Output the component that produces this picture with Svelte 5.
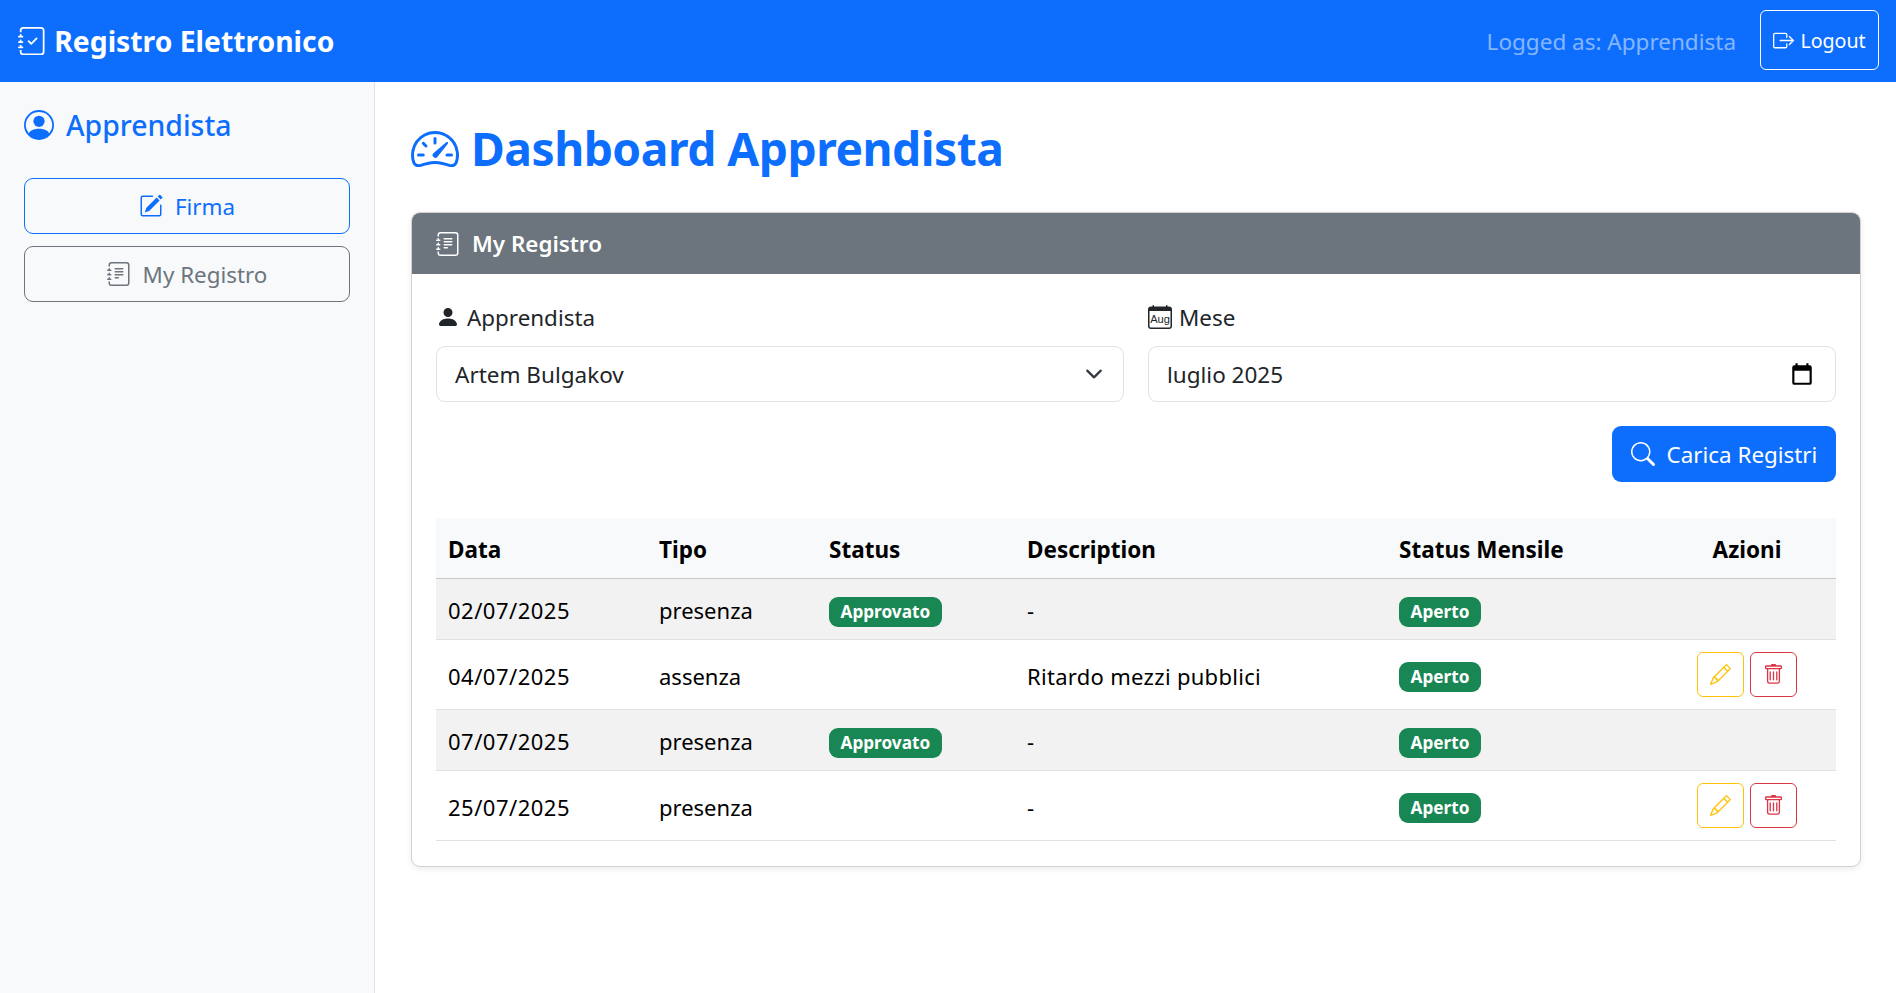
<script>
	const rows = [
		{ data: '02/07/2025', tipo: 'presenza', status: 'Approvato', desc: '-', actions: false },
		{ data: '04/07/2025', tipo: 'assenza', status: '', desc: 'Ritardo mezzi pubblici', actions: true },
		{ data: '07/07/2025', tipo: 'presenza', status: 'Approvato', desc: '-', actions: false },
		{ data: '25/07/2025', tipo: 'presenza', status: '', desc: '-', actions: true }
	];
</script>

{#snippet journalDots()}
	<path d="M3 0h10a2 2 0 0 1 2 2v12a2 2 0 0 1-2 2H3a2 2 0 0 1-2-2v-1h1v1a1 1 0 0 0 1 1h10a1 1 0 0 0 1-1V2a1 1 0 0 0-1-1H3a1 1 0 0 0-1 1v1H1V2a2 2 0 0 1 2-2z" />
	<path d="M1 5v-.5a.5.5 0 0 1 1 0V5h.5a.5.5 0 0 1 0 1h-2a.5.5 0 0 1 0-1H1zm0 3v-.5a.5.5 0 0 1 1 0V8h.5a.5.5 0 0 1 0 1h-2a.5.5 0 0 1 0-1H1zm0 3v-.5a.5.5 0 0 1 1 0v.5h.5a.5.5 0 0 1 0 1h-2a.5.5 0 0 1 0-1H1z" />
{/snippet}

{#snippet journalText()}
	<svg class="bi" viewBox="0 0 16 16" fill="currentColor">
		<path d="M5 10.5a.5.5 0 0 1 .5-.5h2a.5.5 0 0 1 0 1h-2a.5.5 0 0 1-.5-.5zm0-2a.5.5 0 0 1 .5-.5h5a.5.5 0 0 1 0 1h-5a.5.5 0 0 1-.5-.5zm0-2a.5.5 0 0 1 .5-.5h5a.5.5 0 0 1 0 1h-5a.5.5 0 0 1-.5-.5zm0-2a.5.5 0 0 1 .5-.5h5a.5.5 0 0 1 0 1h-5a.5.5 0 0 1-.5-.5z" />
		{@render journalDots()}
	</svg>
{/snippet}

<nav class="navbar">
	<div class="brand">
		<svg class="bi" viewBox="0 0 16 16" fill="currentColor">
			<path fill-rule="evenodd" d="M10.854 6.146a.5.5 0 0 1 0 .708l-3 3a.5.5 0 0 1-.708 0l-1.5-1.5a.5.5 0 1 1 .708-.708L7.5 8.793l2.646-2.647a.5.5 0 0 1 .708 0z" />
			{@render journalDots()}
		</svg>
		Registro Elettronico
	</div>
	<div class="nav-right">
		<span class="logged">Logged as: Apprendista</span>
		<button class="btn-logout">
			<svg class="bi" viewBox="0 0 16 16" fill="currentColor">
				<path fill-rule="evenodd" d="M10 12.5a.5.5 0 0 1-.5.5h-8a.5.5 0 0 1-.5-.5v-9a.5.5 0 0 1 .5-.5h8a.5.5 0 0 1 .5.5v2a.5.5 0 0 0 1 0v-2A1.5 1.5 0 0 0 9.5 2h-8A1.5 1.5 0 0 0 0 3.5v9A1.5 1.5 0 0 0 1.5 14h8a1.5 1.5 0 0 0 1.5-1.5v-2a.5.5 0 0 0-1 0v2z" />
				<path fill-rule="evenodd" d="M15.854 8.354a.5.5 0 0 0 0-.708l-3-3a.5.5 0 0 0-.708.708L14.293 7.5H5.5a.5.5 0 0 0 0 1h8.793l-2.147 2.146a.5.5 0 0 0 .708.708l3-3z" />
			</svg>
			Logout
		</button>
	</div>
</nav>

<div class="layout">
	<aside class="sidebar">
		<h5 class="side-title">
			<svg class="bi" viewBox="0 0 16 16" fill="currentColor">
				<path d="M11 6a3 3 0 1 1-6 0 3 3 0 0 1 6 0z" />
				<path fill-rule="evenodd" d="M0 8a8 8 0 1 1 16 0A8 8 0 0 1 0 8zm8-7a7 7 0 0 0-5.468 11.37C3.242 11.226 4.805 10 8 10s4.757 1.225 5.468 2.37A7 7 0 0 0 8 1z" />
			</svg>
			Apprendista
		</h5>
		<button class="side-btn primary">
			<svg class="bi" viewBox="0 0 16 16" fill="currentColor">
				<path d="M15.502 1.94a.5.5 0 0 1 0 .706L14.459 3.69l-2-2L13.502.646a.5.5 0 0 1 .707 0l1.293 1.293zm-1.75 2.456-2-2L4.939 9.21a.5.5 0 0 0-.121.196l-.805 2.414a.25.25 0 0 0 .316.316l2.414-.805a.5.5 0 0 0 .196-.12l6.813-6.814z" />
				<path fill-rule="evenodd" d="M1 13.5A1.5 1.5 0 0 0 2.5 15h11a1.5 1.5 0 0 0 1.5-1.5v-6a.5.5 0 0 0-1 0v6a.5.5 0 0 1-.5.5h-11a.5.5 0 0 1-.5-.5v-11a.5.5 0 0 1 .5-.5H9a.5.5 0 0 0 0-1H2.5A1.5 1.5 0 0 0 1 2.5v11z" />
			</svg>
			Firma
		</button>
		<button class="side-btn secondary">
			{@render journalText()}
			My Registro
		</button>
	</aside>

	<main class="content">
		<h1 class="title">
			<svg class="bi" viewBox="0 0 16 16" fill="currentColor">
				<path d="M8 4a.5.5 0 0 1 .5.5V6a.5.5 0 0 1-1 0V4.5A.5.5 0 0 1 8 4zM3.732 5.732a.5.5 0 0 1 .707 0l.915.914a.5.5 0 1 1-.708.708l-.914-.915a.5.5 0 0 1 0-.707zM2 10a.5.5 0 0 1 .5-.5h1.586a.5.5 0 0 1 0 1H2.5A.5.5 0 0 1 2 10zm9.5 0a.5.5 0 0 1 .5-.5h1.5a.5.5 0 0 1 0 1H12a.5.5 0 0 1-.5-.5zm.754-4.246a.389.389 0 0 0-.527-.02L7.547 9.31a.91.91 0 1 0 1.302 1.258l3.434-4.297a.389.389 0 0 0-.029-.518z" />
				<path fill-rule="evenodd" d="M0 10a8 8 0 1 1 15.547 2.661c-.442 1.253-1.845 1.602-2.932 1.25C11.309 13.488 9.475 13 8 13c-1.474 0-3.31.488-4.615.911-1.087.352-2.49.003-2.932-1.25A7.988 7.988 0 0 1 0 10zm8-7a7 7 0 0 0-6.603 9.329c.203.575.923.876 1.68.63C4.397 12.533 6.358 12 8 12s3.604.532 4.923.96c.757.245 1.477-.056 1.68-.631A7 7 0 0 0 8 3z" />
			</svg>
			Dashboard Apprendista
		</h1>

		<section class="card">
			<header class="card-header">
				{@render journalText()}
				My Registro
			</header>
			<div class="card-body">
				<div class="filters">
					<div class="field">
						<label for="apprendista">
							<svg class="bi" viewBox="0 0 16 16" fill="currentColor">
								<path d="M3 14s-1 0-1-1 1-4 6-4 6 3 6 4-1 1-1 1H3zm5-6a3 3 0 1 0 0-6 3 3 0 0 0 0 6z" />
							</svg>
							Apprendista
						</label>
						<div class="control">
							<select id="apprendista">
								<option>Artem Bulgakov</option>
							</select>
							<svg class="control-icon chevron" viewBox="0 0 16 16" fill="none" stroke="#343a40" stroke-width="2" stroke-linecap="round" stroke-linejoin="round">
								<path d="m2 5 6 6 6-6" />
							</svg>
						</div>
					</div>
					<div class="field">
						<label for="mese">
							<svg class="bi" viewBox="0 0 16 16" fill="currentColor">
								<path d="M3.5 0a.5.5 0 0 1 .5.5V1h8V.5a.5.5 0 0 1 1 0V1h1a2 2 0 0 1 2 2v11a2 2 0 0 1-2 2H2a2 2 0 0 1-2-2V3a2 2 0 0 1 2-2h1V.5a.5.5 0 0 1 .5-.5zM1 4v10a1 1 0 0 0 1 1h12a1 1 0 0 0 1-1V4H1z" />
								<text x="8" y="12" text-anchor="middle" class="aug">Aug</text>
							</svg>
							Mese
						</label>
						<div class="control">
							<input id="mese" type="text" value="luglio 2025" />
							<svg class="control-icon calendar" viewBox="0 0 24 24" fill="#000">
								<path d="M19 4h-1V2h-2v2H8V2H6v2H5a2 2 0 0 0-2 2v14a2 2 0 0 0 2 2h14a2 2 0 0 0 2-2V6a2 2 0 0 0-2-2zm0 16H5V9h14z" />
							</svg>
						</div>
					</div>
				</div>

				<div class="actions-row">
					<button class="btn-load">
						<svg class="bi" viewBox="0 0 16 16" fill="currentColor">
							<path d="M11.742 10.344a6.5 6.5 0 1 0-1.397 1.398h-.001c.03.04.062.078.098.115l3.85 3.85a1 1 0 0 0 1.415-1.414l-3.85-3.85a1.007 1.007 0 0 0-.115-.1zM12 6.5a5.5 5.5 0 1 1-11 0 5.5 5.5 0 0 1 11 0z" />
						</svg>
						Carica Registri
					</button>
				</div>

				<table>
					<colgroup>
						<col style="width: 211px" />
						<col style="width: 170px" />
						<col style="width: 198px" />
						<col style="width: 372px" />
						<col />
						<col style="width: 178px" />
					</colgroup>
					<thead>
						<tr>
							<th>Data</th>
							<th>Tipo</th>
							<th>Status</th>
							<th>Description</th>
							<th>Status Mensile</th>
							<th class="center">Azioni</th>
						</tr>
					</thead>
					<tbody>
						{#each rows as r}
							<tr class:tall={r.actions}>
								<td class="date">{r.data}</td>
								<td>{r.tipo}</td>
								<td>
									{#if r.status}<span class="badge">{r.status}</span>{/if}
								</td>
								<td class="desc">{r.desc}</td>
								<td><span class="badge">Aperto</span></td>
								<td class="center cell-actions">
									{#if r.actions}
										<div class="row-actions">
											<button class="icon-btn warn" aria-label="Modifica">
												<svg class="bi" viewBox="0 0 16 16" fill="currentColor">
													<path d="M12.146.146a.5.5 0 0 1 .708 0l3 3a.5.5 0 0 1 0 .708l-10 10a.5.5 0 0 1-.168.11l-5 2a.5.5 0 0 1-.65-.65l2-5a.5.5 0 0 1 .11-.168l10-10zM11.207 2.5 13.5 4.793 14.793 3.5 12.5 1.207 11.207 2.5zm1.586 3L10.5 3.207 4 9.707V10h.5a.5.5 0 0 1 .5.5v.5h.5a.5.5 0 0 1 .5.5v.5h.293l6.5-6.5zm-9.761 5.175-.106.106-1.528 3.821 3.821-1.528.106-.106A.5.5 0 0 1 5 12.5V12h-.5a.5.5 0 0 1-.5-.5V11h-.5a.5.5 0 0 1-.468-.325z" />
												</svg>
											</button>
											<button class="icon-btn danger" aria-label="Elimina">
												<svg class="bi" viewBox="0 0 16 16" fill="currentColor">
													<path d="M5.5 5.5A.5.5 0 0 1 6 6v6a.5.5 0 0 1-1 0V6a.5.5 0 0 1 .5-.5zm2.5 0a.5.5 0 0 1 .5.5v6a.5.5 0 0 1-1 0V6a.5.5 0 0 1 .5-.5zm3 .5a.5.5 0 0 0-1 0v6a.5.5 0 0 0 1 0V6z" />
													<path fill-rule="evenodd" d="M14.5 3a1 1 0 0 1-1 1H13v9a2 2 0 0 1-2 2H5a2 2 0 0 1-2-2V4h-.5a1 1 0 0 1-1-1V2a1 1 0 0 1 1-1H6a1 1 0 0 1 1-1h2a1 1 0 0 1 1 1h3.5a1 1 0 0 1 1 1v1zM4.118 4 4 4.059V13a1 1 0 0 0 1 1h6a1 1 0 0 0 1-1V4.059L11.882 4H4.118zM2.5 3V2h11v1h-11z" />
												</svg>
											</button>
										</div>
									{/if}
								</td>
							</tr>
						{/each}
					</tbody>
				</table>
			</div>
		</section>
	</main>
</div>

<style>
	:global(body) {
		margin: 0;
		background: #fff;
		color: #212529;
		font-family: 'Noto Sans', 'Open Sans', sans-serif;
		font-size: 22px;
	}

	.bi {
		width: 1em;
		height: 1em;
		flex: none;
		display: inline-block;
	}

	button {
		font-family: inherit;
		cursor: pointer;
		background: transparent;
	}

	.navbar {
		height: 82px;
		box-sizing: border-box;
		background: #0d6efd;
		color: #fff;
		display: flex;
		align-items: center;
		justify-content: space-between;
		padding: 0 17px 0 18px;
	}

	.brand {
		display: flex;
		align-items: center;
		gap: 8px;
		font-size: 28.3px;
		font-weight: 700;
	}

	.nav-right {
		display: flex;
		align-items: center;
		gap: 24px;
	}

	.logged {
		color: rgba(255, 255, 255, 0.5);
		font-size: 22.5px;
	}

	.btn-logout {
		height: 60px;
		width: 119px;
		margin-bottom: 2px;
		display: flex;
		align-items: center;
		justify-content: center;
		gap: 6px;
		color: #fff;
		border: 1px solid #fff;
		border-radius: 6px;
		font-size: 19.6px;
	}

	.btn-logout .bi {
		font-size: 21px;
	}

	.layout {
		display: flex;
		min-height: calc(100vh - 82px);
	}

	.sidebar {
		width: 375px;
		box-sizing: border-box;
		background: #f8f9fa;
		border-right: 1px solid #dee2e6;
		padding: 24px;
		display: flex;
		flex-direction: column;
		gap: 12px;
	}

	.side-title {
		margin: 0 0 22px;
		display: flex;
		align-items: center;
		gap: 12px;
		height: 38px;
		font-size: 28.4px;
		font-weight: 500;
		color: #0d6efd;
	}

	.side-title .bi {
		font-size: 30px;
	}

	.side-btn {
		height: 56px;
		display: flex;
		align-items: center;
		justify-content: center;
		gap: 12px;
		border-radius: 9px;
		font-size: 22.4px;
	}

	.side-btn .bi {
		font-size: 24px;
	}

	.side-btn.primary {
		color: #0d6efd;
		border: 1px solid #0d6efd;
	}

	.side-btn.secondary {
		color: #6c757d;
		border: 1px solid #6c757d;
	}

	.content {
		flex: 1;
		padding: 24px 35px 24px 36px;
	}

	.title {
		margin: 0 0 23px;
		height: 83px;
		padding-top: 2px;
		box-sizing: border-box;
		display: flex;
		align-items: center;
		gap: 12px;
		font-size: 46.2px;
		font-weight: 700;
		color: #0d6efd;
		letter-spacing: -0.5px;
	}

	.title .bi {
		font-size: 48px;
	}

	.card {
		border: 1px solid rgba(0, 0, 0, 0.175);
		border-radius: 9px;
		box-shadow: 0 2px 6px rgba(0, 0, 0, 0.08);
		overflow: hidden;
	}

	.card-header {
		height: 61px;
		background: #6c757d;
		color: #fff;
		display: flex;
		align-items: center;
		gap: 12px;
		padding: 0 24px;
		font-size: 22.4px;
		font-weight: 600;
	}

	.card-header .bi {
		font-size: 24px;
	}

	.card-body {
		padding: 25px 24px 25px;
	}

	.filters {
		display: grid;
		grid-template-columns: 1fr 1fr;
		gap: 24px;
	}

	label {
		display: flex;
		align-items: center;
		gap: 7px;
		height: 36px;
		margin-bottom: 11px;
		font-size: 22.4px;
	}

	label .bi {
		font-size: 24px;
	}

	.control {
		position: relative;
		height: 56px;
	}

	select,
	input {
		width: 100%;
		height: 100%;
		box-sizing: border-box;
		border: 1px solid #dee2e6;
		border-radius: 9px;
		background: #fff;
		color: #212529;
		font-family: inherit;
		font-size: 22.5px;
		padding: 0 18px;
		appearance: none;
		outline: none;
	}

	.control-icon {
		position: absolute;
		pointer-events: none;
	}

	.chevron {
		right: 21px;
		top: 19px;
		width: 18px;
		height: 18px;
	}

	.calendar {
		right: 21px;
		top: 15px;
		width: 26px;
		height: 26px;
	}

	.aug {
		font-size: 7.4px;
		font-family: 'Liberation Sans', sans-serif;
	}

	.actions-row {
		display: flex;
		justify-content: flex-end;
		margin: 24px 0 36px;
	}

	.btn-load {
		width: 224px;
		height: 56px;
		display: flex;
		align-items: center;
		justify-content: center;
		gap: 12px;
		background: #0d6efd;
		color: #fff;
		border: none;
		border-radius: 9px;
		font-size: 22.4px;
	}

	.btn-load .bi {
		font-size: 24px;
	}

	table {
		width: 100%;
		table-layout: fixed;
		border-collapse: collapse;
		font-size: 22px;
		color: #000;
	}

	th {
		height: 60px;
		box-sizing: border-box;
		padding: 3px 12px 0;
		background: #f8f9fa;
		border-bottom: 1px solid #c6c7c8;
		text-align: left;
		font-size: 22.5px;
		font-weight: 700;
	}

	th.center {
		text-align: center;
	}

	td {
		height: 61px;
		box-sizing: border-box;
		padding: 3px 12px 0;
		border-bottom: 1px solid #dee2e6;
	}

	td.date {
		letter-spacing: 0.5px;
	}

	td.desc {
		letter-spacing: 0.3px;
	}

	td.cell-actions {
		padding-top: 0;
	}

	tr.tall td {
		height: 70px;
	}

	tbody tr:nth-child(odd) td {
		background: #f2f2f2;
	}

	.badge {
		display: inline-block;
		background: #198754;
		color: #fff;
		font-size: 17.2px;
		font-weight: 700;
		line-height: 30px;
		padding: 0 11.5px;
		border-radius: 9px;
		vertical-align: middle;
	}

	.row-actions {
		display: flex;
		justify-content: center;
		gap: 6px;
	}

	.icon-btn {
		width: 47px;
		height: 45px;
		display: flex;
		align-items: center;
		justify-content: center;
		border-radius: 6px;
		padding: 0;
		font-size: 21px;
	}

	.icon-btn.warn {
		color: #ffc107;
		border: 1px solid #ffc107;
	}

	.icon-btn.danger {
		color: #dc3545;
		border: 1px solid #dc3545;
	}
</style>
